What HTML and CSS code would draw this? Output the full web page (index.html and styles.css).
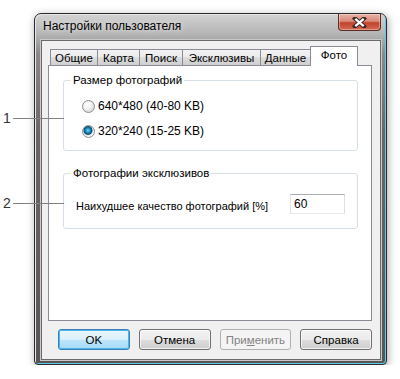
FILE: index.html
```html
<!DOCTYPE html>
<html lang="ru">
<head>
  <meta charset="UTF-8">
  <title>Настройки пользователя</title>
  <link rel="stylesheet" href="styles.css">
</head>
<body>
  <div class="window">
    <div class="titlebar">
      <span class="title">Настройки пользователя</span>
      <span class="close">
        <svg width="17" height="11" viewBox="0 0 17 11">
          <path d="M4 1.5 L13 9.5 M13 1.5 L4 9.5" stroke="#3b2a26" stroke-width="4.2" stroke-linecap="square"/>
          <path d="M4.3 1.8 L12.7 9.2 M12.7 1.8 L4.3 9.2" stroke="#fff" stroke-width="2.2"/>
        </svg>
      </span>
    </div>

    <div class="client">
      <div class="tabs">
        <span class="tab t1">Общие</span>
        <span class="tab t2">Карта</span>
        <span class="tab t3">Поиск</span>
        <span class="tab t4">Эксклюзивы</span>
        <span class="tab t5">Данные</span>
        <span class="tab t6 active">Фото</span>
      </div>

      <div class="panel">
        <fieldset class="group g1">
          <legend>Размер фотографий</legend>
          <label class="radio-row">
            <input type="radio" name="size">
            <span>640*480 (40-80 KB)</span>
          </label>
          <label class="radio-row">
            <input type="radio" name="size" checked>
            <span>320*240 (15-25 KB)</span>
          </label>
        </fieldset>

        <fieldset class="group g2">
          <legend>Фотографии эксклюзивов</legend>
          <div class="field-row">
            <label for="quality">Наихудшее качество фотографий [%]</label>
            <input type="text" id="quality" value="60">
          </div>
        </fieldset>
      </div>

      <div class="buttons">
        <button class="btn default">OK</button>
        <button class="btn">Отмена</button>
        <button class="btn" disabled>При<u>м</u>енить</button>
        <button class="btn">Справка</button>
      </div>
    </div>
  </div>

  <!-- callouts -->
  <div class="callout c1"><span class="num">1</span><span class="line"></span></div>
  <div class="callout c2"><span class="num">2</span><span class="line"></span></div>
</body>
</html>
```

FILE: styles.css
```css
body {
  margin: 0;
  padding: 13px 0 0 34px;
  background: #fff;
  font-family: 'Liberation Sans', Arial, sans-serif;
  font-size: 11px;
  color: #000;
}

.window {
  width: 353px;
  height: 352px;
  box-sizing: border-box;
  border: 1px solid #2b2b2b;
  border-radius: 7px 7px 4px 4px;
  background: linear-gradient(to bottom, #d3d3d3 0, #b4b4b4 20px, #8e8888 40px, #6d6565 120px, #5a5555 100%);
  box-shadow: inset 1px 1px 0 #e6e6e6, inset -1px -1px 0 #5fc9ee, 1px 2px 8px rgba(0, 0, 0, 0.35);
  display: flex;
  flex-direction: column;
}

.titlebar {
  height: 26px;
  display: flex;
  justify-content: space-between;
  align-items: flex-start;
  padding-left: 8px;
  padding-right: 5px;
}

.title {
  margin-top: 5px;
  font-size: 12px;
  line-height: 14px;
  color: #000;
  text-shadow: 0 0 6px rgba(255, 255, 255, 0.9);
}

.close {
  width: 43px;
  height: 17px;
  box-sizing: border-box;
  border: 1px solid #5b2c22;
  border-top: none;
  border-radius: 0 0 4px 4px;
  background: linear-gradient(to bottom, #e9b0a5 0, #d88a7b 45%, #c1432b 55%, #d46a55 100%);
  box-shadow: inset 0 0 0 1px rgba(255, 255, 255, 0.35);
  display: flex;
  justify-content: center;
  align-items: center;
}

.client {
  flex: 1;
  margin: 0 5px 4px 6px;
  background: #f0f0f0;
  border: 1px solid #6a6a6a;
  box-shadow: 0 0 0 1px #c9c9c9;
  padding: 5px 8px 8px 6px;
  display: flex;
  flex-direction: column;
}

/* Tabs */
.tabs {
  height: 19px;
  display: flex;
  align-items: flex-end;
  padding-left: 2px;
  position: relative;
  z-index: 1;
}

.tab {
  height: 16px;
  box-sizing: border-box;
  border: 1px solid #898c95;
  border-bottom: none;
  margin-left: -1px;
  background: linear-gradient(to bottom, #f2f2f2 0, #ebebeb 50%, #dddddd 50%, #cfcfcf 100%);
  text-align: center;
  font-size: 11.5px;
  line-height: 16px;
}

.t1 { width: 48px; margin-left: 0; }
.t2 { width: 43px; }
.t3 { width: 44px; }
.t4 { width: 79px; }
.t5 { width: 51px; }
.t6 { width: 48px; }

.tab.active {
  height: 20px;
  margin-bottom: -1px;
  background: #fff;
  line-height: 16px;
}

.panel {
  height: 256px;
  box-sizing: border-box;
  background: #fff;
  border: 1px solid #898c95;
  padding: 7px 13px 0 14px;
}

/* Group boxes */
.group {
  margin: 0;
  border: 1px solid #d5dfe5;
  border-radius: 3px;
  padding: 0;
  box-shadow: inset 1px 1px 0 #fff;
}

.group legend {
  padding: 0 2px;
  font-size: 11.5px;
  line-height: 14px;
}

.g1 {
  padding: 10px 0 10px 18px;
}

.g1 legend {
  margin-left: -11px;
}

.g2 {
  margin-top: 15px;
  padding: 14px 12px 14px 12px;
}

.g2 legend {
  margin-left: -5px;
}

.radio-row {
  display: flex;
  align-items: center;
  gap: 3px;
  height: 18px;
  font-size: 12px;
}

.radio-row + .radio-row {
  margin-top: 7px;
}

.radio-row input {
  appearance: none;
  margin: 0;
  width: 13px;
  height: 13px;
  border-radius: 50%;
  border: 1px solid #8e8f8f;
  background: radial-gradient(circle at 40% 35%, #ffffff 0, #f4f4f4 35%, #d8d8d8 80%, #cfcfcf 100%);
  box-sizing: border-box;
}

.radio-row input:checked {
  background: radial-gradient(circle at 45% 40%, #7fd4f4 0, #1a8fc7 25%, #0f4d73 45%, #e6e6e6 55%, #f7f7f7 70%, #d6d6d6 100%);
}

.field-row {
  display: flex;
  justify-content: space-between;
  align-items: center;
  height: 20px;
}

.field-row label {
  padding-top: 4px;
}

.field-row input {
  width: 55px;
  height: 20px;
  box-sizing: border-box;
  margin: 0;
  padding: 0 3px;
  border: 1px solid #abadb3;
  border-left-color: #e2e3ea;
  border-right-color: #dbdfe6;
  border-bottom-color: #e3e9ef;
  font-family: inherit;
  font-size: 12px;
  background: #fff;
}

/* Buttons */
.buttons {
  margin-top: 8px;
  padding-left: 10px;
  display: flex;
  gap: 9px;
}

.btn {
  width: 72px;
  height: 21px;
  box-sizing: border-box;
  border: 1px solid #707070;
  border-radius: 3px;
  background: linear-gradient(to bottom, #f2f2f2 0, #ebebeb 50%, #dddddd 50%, #cfcfcf 100%);
  box-shadow: inset 0 0 0 1px rgba(255, 255, 255, 0.7);
  font-family: inherit;
  font-size: 11.5px;
  color: #000;
  padding: 0;
}

.btn.default {
  border-color: #3c7fb1;
  background: linear-gradient(to bottom, #eaf6fd 0, #d9f0fc 50%, #bee6fd 50%, #a7d9f5 100%);
  box-shadow: inset 0 0 0 1px #48b7ee;
}

.btn:disabled {
  border-color: #adb2b5;
  background: #f4f4f4;
  color: #838383;
  box-shadow: none;
}

/* Callouts */
.callout {
  position: absolute;
  left: 3px;
  display: flex;
  align-items: center;
  gap: 3px;
}

.c1 { top: 110px; }
.c2 { top: 195px; }

.num {
  font-size: 14px;
  line-height: 16px;
  color: #333;
  width: 7px;
}

.line {
  width: 51px;
  height: 1px;
  background: #808080;
}
```
